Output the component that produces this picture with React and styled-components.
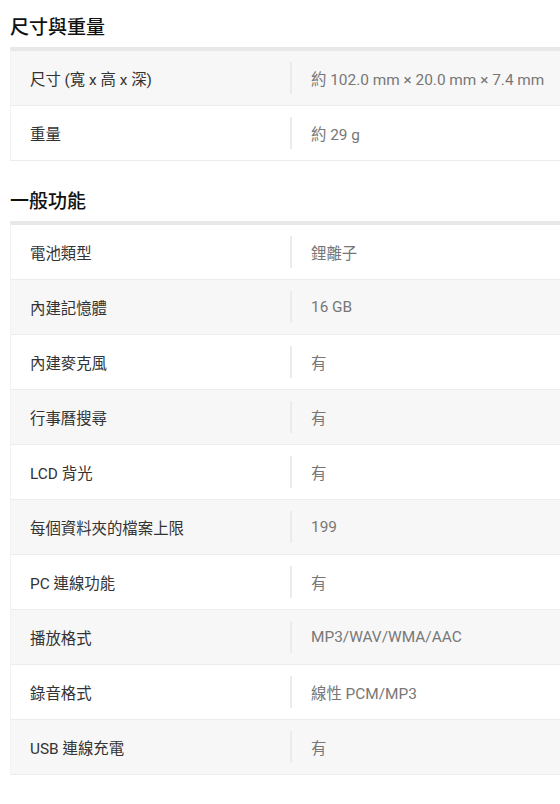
import React from "react";
import styled, { createGlobalStyle } from "styled-components";

const Global = createGlobalStyle`
  html, body { margin: 0; padding: 0; background: #fff; overflow: hidden; }
  body { font-family: Roboto, "Noto Sans CJK TC", sans-serif; }
`;

const Page = styled.div`
  padding: 13px 0 0 10px;
  width: 560px;
  box-sizing: border-box;
`;

const Section = styled.section`
  & + & { margin-top: 26px; }
`;

const Heading = styled.h2`
  margin: 0 0 4px;
  font-size: 19px;
  line-height: 30px;
  font-weight: 500;
  color: #111;
  font-family: Roboto, "Noto Sans CJK TC", sans-serif;
`;

const Table = styled.div`
  width: 580px;
  border-top: 4px solid #e8e8e8;
  border-left: 1px solid #f2f2f2;
`;

const Row = styled.div`
  display: grid;
  grid-template-columns: 279px 1fr;
  align-items: center;
  height: 55px;
  box-sizing: border-box;
  border-bottom: 1px solid #ececec;
  background: ${(p) => (p.$shade ? "#f7f7f7" : "#fff")};
`;

const Label = styled.div`
  padding-left: 19px;
  font-size: 15.4px;
  color: #333;
`;

const Value = styled.div`
  display: flex;
  align-items: center;
  height: 32px;
  border-left: 2px solid #ebebeb;
  padding-left: 19px;
  font-size: 15.4px;
  color: #777;
`;

const sections = [
  {
    title: "尺寸與重量",
    startShade: true,
    rows: [
      ["尺寸 (寬 x 高 x 深)", "約 102.0 mm × 20.0 mm × 7.4 mm"],
      ["重量", "約 29 g"],
    ],
  },
  {
    title: "一般功能",
    startShade: false,
    rows: [
      ["電池類型", "鋰離子"],
      ["內建記憶體", "16 GB"],
      ["內建麥克風", "有"],
      ["行事曆搜尋", "有"],
      ["LCD 背光", "有"],
      ["每個資料夾的檔案上限", "199"],
      ["PC 連線功能", "有"],
      ["播放格式", "MP3/WAV/WMA/AAC"],
      ["錄音格式", "線性 PCM/MP3"],
      ["USB 連線充電", "有"],
    ],
  },
];

export default function App() {
  return (
    <>
      <Global />
      <Page>
        {sections.map((s) => (
          <Section key={s.title}>
            <Heading>{s.title}</Heading>
            <Table>
              {s.rows.map(([k, v], i) => (
                <Row key={k} $shade={s.startShade ? i % 2 === 0 : i % 2 === 1}>
                  <Label>{k}</Label>
                  <Value>{v}</Value>
                </Row>
              ))}
            </Table>
          </Section>
        ))}
      </Page>
    </>
  );
}
